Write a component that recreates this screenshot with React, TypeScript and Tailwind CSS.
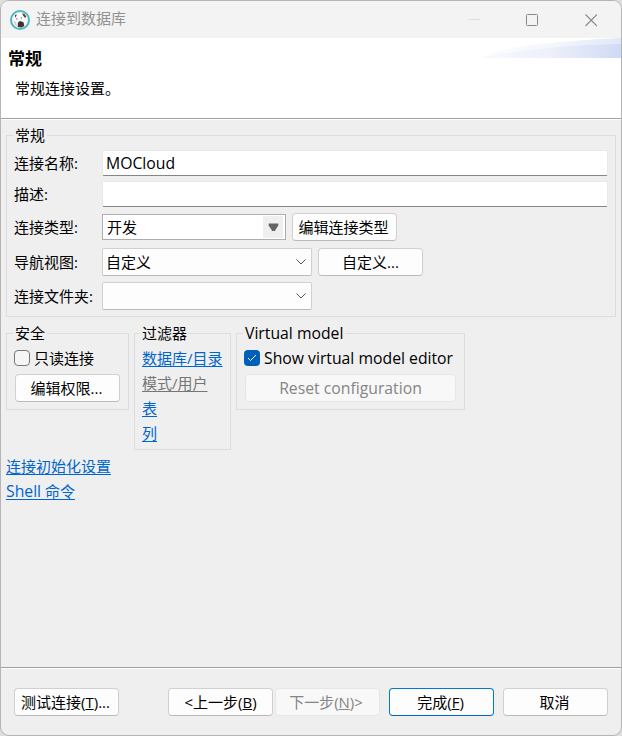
import React from "react";

type Children = { children?: React.ReactNode; className?: string };

function Group({ title, titleClass = "", className = "", children }: Children & { title: string; titleClass?: string }) {
  return (
    <section className={`relative border border-[#dcdcdc] ${className}`}>
      <h2 className={`absolute -top-[11px] left-[6px] whitespace-nowrap bg-[#efefef] px-[2px] leading-5 ${titleClass}`}>{title}</h2>
      {children}
    </section>
  );
}

function Button({ children, className = "w-[105px] pr-[2px]", tone = "normal" }: Children & { tone?: "normal" | "disabled" | "primary" }) {
  const tones = {
    normal: "border-[#d0d0d0] border-b-[#bababa] bg-[#fdfdfd]",
    disabled: "border-[#e6e6e6] bg-[#f8f8f8] text-[#858585]",
    primary: "border-[#0078d4] border-b-[#0067c0] bg-[#fdfdfd]",
  };
  return (
    <button className={`flex h-7 shrink-0 items-center justify-center whitespace-pre rounded-[4px] border pb-px ${tones[tone]} ${className}`}>
      {children}
    </button>
  );
}

function Row({ label, className, children }: Children & { label: string }) {
  return (
    <div className={`flex items-center ${className}`}>
      <label className="w-[88px] shrink-0 whitespace-nowrap">{label}</label>
      {children}
    </div>
  );
}

function Field({ children }: Children) {
  return (
    <div className="flex h-[26px] w-[506px] items-center rounded-[2px] border border-[#e8e8e8] border-b-[#868686] bg-white pl-[3px] text-[15.75px]">
      {children}
    </div>
  );
}

function Combo({ children }: Children) {
  return (
    <div className="flex h-7 w-[210px] items-center justify-between rounded-[2px] border border-[#d0d0d0] border-b-[#bababa] bg-[#fdfdfd] pl-[3px] pr-[5px]">
      <span>{children}</span>
      <svg width="10" height="6" viewBox="0 0 10 6" fill="none" stroke="#555" strokeWidth="1">
        <path d="M.5.5 5 5 9.5.5" />
      </svg>
    </div>
  );
}

function Link({ children, className = "text-[#0066cc]" }: Children) {
  return <a className={`block h-[25px] w-fit whitespace-nowrap leading-[25px] underline decoration-1 underline-offset-2 ${className}`}>{children}</a>;
}

function TitleBar() {
  return (
    <header className="flex h-[37px] items-center bg-[#f3f3f3] pl-[9px] text-[#929292]">
      <svg className="mt-px" width="20" height="20" viewBox="0 0 20 20">
        <circle cx="10" cy="10" r="9" fill="#faf8f6" stroke="#4db7bd" strokeWidth="2" />
        <path d="M3.500 7.500C5 4 7 3 9 3.400c4-.6 7 2 6.800 6L13 9.500 11 8 8 9 6 12 4 11Z" fill="#fff" />
        <path d="M12 3.300l2.600.8 1.600 2.500-.9 1.400-1.800-1.800ZM4.800 5.200l1.600-.9.2 1.500-1.400 2Z" fill="#51433f" />
        <path d="M8 12.500 10 11l3.500 1.200.8 3.800-2.800 1.600-3.800-.5Z" fill="#403431" />
        <path d="M6.200 8.200h1.200v1.400H6.200ZM10.800 7.200h1.200v1.200h-1.200Z" fill="#776b66" />
        <path d="M3.500 10.500 6 12l1 4-2-1.200Z" fill="#d4ccc8" />
      </svg>
      <span className="ml-[6px] pb-[3px]">连接到数据库</span>
      <svg className="ml-auto mr-[24px]" width="130" height="14" viewBox="0 0 130 14" fill="none">
        <path d="M1 6.5h12" stroke="#dedede" />
        <rect x="59.5" y="1.5" width="11" height="11" rx="1" stroke="#898989" />
        <path d="m118.500 1.500 11.500 11.500M130 1.500 118.500 13" stroke="#898989" strokeWidth="1.1" />
      </svg>
    </header>
  );
}

function Header() {
  return (
    <div className="flex h-[81px] justify-between border-b border-[#a0a0a0] bg-white">
      <div className="pl-[7px] pt-[10px]">
        <h1 className="text-[17px] font-bold leading-[22px]">常规</h1>
        <p className="ml-[7px] mt-[8px] leading-5">常规连接设置。</p>
      </div>
      <svg width="140" height="20" viewBox="0 0 140 20">
        <defs>
          <linearGradient id="swoosh">
            <stop offset="0" stopColor="#f9fafe" />
            <stop offset=".5" stopColor="#edf0fa" />
            <stop offset="1" stopColor="#d0daf5" />
          </linearGradient>
          <linearGradient id="swooshEdge">
            <stop offset="0" stopColor="#fbfcfe" />
            <stop offset=".5" stopColor="#f5f7fd" />
            <stop offset="1" stopColor="#dfe8f9" />
          </linearGradient>
        </defs>
        <path d="M0 20C20 8 80 3 140 0v20Z" fill="url(#swooshEdge)" />
        <path d="M0 20C35 12 85 7 140 6v14Z" fill="url(#swoosh)" />
      </svg>
    </div>
  );
}

export default function App() {
  return (
    <div className="h-[736px] w-[622px] bg-[#dedede]">
      <main className="flex h-full w-full flex-col overflow-hidden rounded-[9px] border border-[#b5b5b5] bg-[#efefef] font-['Open_Sans','Noto_Sans_CJK_SC',sans-serif] text-[15px] leading-5 text-black">
        <TitleBar />
        <Header />
        <div className="flex-1 border-t border-white pl-[5px]">
          <Group title="常规" className="mt-[15px] h-[182px] w-[610px] pl-[7px] pt-[14px]">
            <Row label="连接名称:" className="h-[26px]"><Field>MOCloud</Field></Row>
            <Row label="描述:" className="mt-[5px] h-[26px]"><Field /></Row>
            <Row label="连接类型:" className="mt-[6px] h-7">
              <div className="flex h-[26px] w-[184px] items-center justify-between border border-[#abadb3] bg-white py-px pl-1 pr-[2px]">
                <span className="-mt-px">开发</span>
                <span className="flex h-full w-5 items-center justify-center bg-[#efefef]">
                  <svg width="11" height="9" viewBox="0 0 11 9"><path d="M.7.5h9.600v2L6.800 8H4.200L.7 2.500Z" fill="#646464" /></svg>
                </span>
              </div>
              <Button className="ml-[6px] w-[105px] pr-[2px]">编辑连接类型</Button>
            </Row>
            <Row label="导航视图:" className="mt-[7px] h-7">
              <Combo>自定义</Combo>
              <Button className="ml-[6px] w-[105px]">自定义...</Button>
            </Row>
            <Row label="连接文件夹:" className="mt-[6px] h-7"><Combo /></Row>
          </Group>

          <div className="mt-4 flex items-start gap-[5px]">
            <Group title="安全" className="h-[77px] w-[123px] pl-[7px] pt-[14px]">
              <label className="flex h-5 items-center gap-1">
                <span className="size-4 rounded-[4px] border border-[#777] bg-[#f5f5f5]" />只读连接
              </label>
              <div className="ml-px mt-[6px]"><Button>编辑权限...</Button></div>
            </Group>
            <Group title="过滤器" titleClass="-ml-px" className="h-[117px] w-[97px] pl-[7px] pt-3">
              <Link>数据库/目录</Link>
              <Link className="text-[#767676]">模式/用户</Link>
              <Link>表</Link>
              <Link>列</Link>
            </Group>
            <Group title="Virtual model" titleClass="text-[15.75px]" className="h-[77px] w-[229px] pl-[7px] pt-[14px]">
              <label className="flex h-5 items-center gap-1 whitespace-nowrap text-[15.75px]">
                <span className="flex size-4 items-center justify-center rounded-[4px] bg-[#005fb8]">
                  <svg width="10" height="8" viewBox="0 0 10 8" fill="none" stroke="white"><path d="m1 4 2.500 2.500L9 1" /></svg>
                </span>
                Show virtual model editor
              </label>
              <div className="ml-px mt-[6px]"><Button tone="disabled" className="w-[211px] text-[15.75px]">Reset configuration</Button></div>
            </Group>
          </div>

          <nav className="mt-1">
            <Link>连接初始化设置</Link>
            <Link><span className="text-[15.75px]">Shell</span> 命令</Link>
          </nav>
        </div>

        <footer className="flex h-[68px] shrink-0 border-t border-[#a0a0a0] pl-[13px] shadow-[inset_0_1px_0_white]">
          <div className="mt-5 flex">
            <Button>测试连接(<u>T</u>)...</Button>
            <Button className="ml-[49px] w-[105px]">&lt;上一步(<u>B</u>)</Button>
            <Button tone="disabled" className="ml-[2px] w-[105px] pr-[3px]">下一步(<u>N</u>)&gt;</Button>
            <Button tone="primary" className="ml-[9px] w-[105px] pr-[2px]">完成(<u>F</u>)</Button>
            <Button className="ml-[9px] w-[105px] pr-[2px]">取消</Button>
          </div>
        </footer>
      </main>
    </div>
  );
}
